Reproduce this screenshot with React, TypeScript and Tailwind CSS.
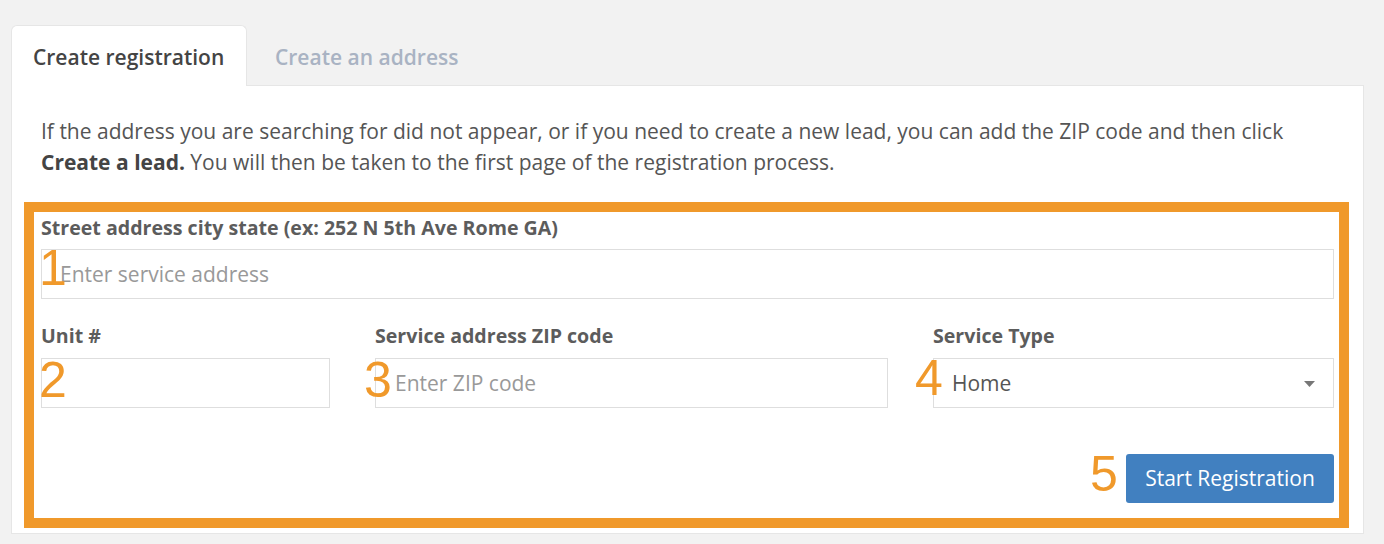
import { useState } from "react"

const font = { fontFamily: "'Open Sans', 'Liberation Sans', sans-serif" }

function Marker({ n, className }: { n: string; className: string }) {
    return (
        <span
            className={
                "pointer-events-none absolute text-[50px] leading-none text-[#f0992b] font-['Liberation_Sans',Arial,sans-serif] " +
                className
            }
        >
            {n}
        </span>
    )
}

export default function App() {
    const [tab, setTab] = useState(0)

    return (
        <div
            className="min-h-screen bg-[#f2f2f2] pl-[11px] pr-[20px] pt-[25px] pb-[10px] text-[#555]"
            style={font}
        >
            {/* Tabs */}
            <div className="flex items-end">
                <button
                    onClick={() => setTab(0)}
                    className="relative z-10 -mb-px h-[61px] w-[236px] rounded-t-md border border-b-0 border-[#e6e6e6] bg-white pl-[21px] pt-[3px] text-left text-[21px] font-semibold text-[#444]"
                >
                    Create registration
                </button>
                <button
                    onClick={() => setTab(1)}
                    className="h-[60px] pl-[28px] pt-[5px] text-left text-[21px] font-semibold text-[#a9b3c3]"
                >
                    Create an address
                </button>
            </div>

            {/* Panel */}
            <div className="h-[449px] border border-[#e6e6e6] bg-white">
                <p className="px-[29px] pt-[30px] text-[21px] leading-[31px] text-[#555]">
                    If the address you are searching for did not appear, or if you need to create a new lead, you can add
                    the ZIP code and then click
                    <br />
                    <b className="font-bold text-[#444]">Create a lead.</b> You will then be taken to the first page of the
                    registration process.
                </p>

                {/* Highlighted form */}
                <div className="ml-[12px] mr-[14px] mt-[24px] border-[10px] border-[#f0992b] pb-[15px] pl-[7px] pr-[5px] pt-[4px]">
                    <label className="block text-[19.6px] font-bold leading-[24px] text-[#5c5c5c]">
                        Street address city state (ex: 252 N 5th Ave Rome GA)
                    </label>
                    <div className="relative mt-[9px]">
                        <input
                            placeholder="Enter service address"
                            className="h-[50px] w-full border border-[#dedede] px-[18px] text-[21px] text-[#555] outline-none placeholder:text-[#999]"
                        />
                        <Marker n="1" className="-left-[2px] -top-[6px]" />
                    </div>

                    <div className="mt-[25px] grid grid-cols-[289px_513px_401px] gap-x-[45px] text-[#5c5c5c]">
                        <div>
                            <label className="block text-[19.6px] font-bold leading-[24px]">Unit #</label>
                            <div className="relative mt-[10px]">
                                <input className="h-[50px] w-full border border-[#dedede] px-[18px] text-[21px] outline-none" />
                                <Marker n="2" className="-left-[2px] -top-[3px]" />
                            </div>
                        </div>
                        <div>
                            <label className="block text-[19.6px] font-bold leading-[24px]">Service address ZIP code</label>
                            <div className="relative mt-[10px]">
                                <input
                                    placeholder="Enter ZIP code"
                                    className="h-[50px] w-full border border-[#dedede] px-[19px] text-[21px] outline-none placeholder:text-[#999]"
                                />
                                <Marker n="3" className="-left-[11px] -top-[3px]" />
                            </div>
                        </div>
                        <div>
                            <label className="block text-[19.6px] font-bold leading-[24px]">Service Type</label>
                            <div className="relative mt-[10px]">
                                <div className="flex h-[50px] w-full items-center justify-between border border-[#dedede] pl-[18px] pr-[18px] pt-[2px] text-[21px] text-[#555]">
                                    <span>Home</span>
                                    <svg width="11" height="6" viewBox="0 0 11 6">
                                        <path d="M0 0h11L5.5 6z" fill="#777" />
                                    </svg>
                                </div>
                                <Marker n="4" className="-left-[18px] -top-[5px]" />
                            </div>
                        </div>
                    </div>

                    <div className="mt-[46px] flex justify-end">
                        <div className="relative">
                            <button className="h-[49px] w-[208px] rounded-[3px] bg-[#4180c0] text-[21px] text-white">
                                Start Registration
                            </button>
                            <Marker n="5" className="-left-[36px] -top-[5px]" />
                        </div>
                    </div>
                </div>
            </div>
        </div>
    )
}
